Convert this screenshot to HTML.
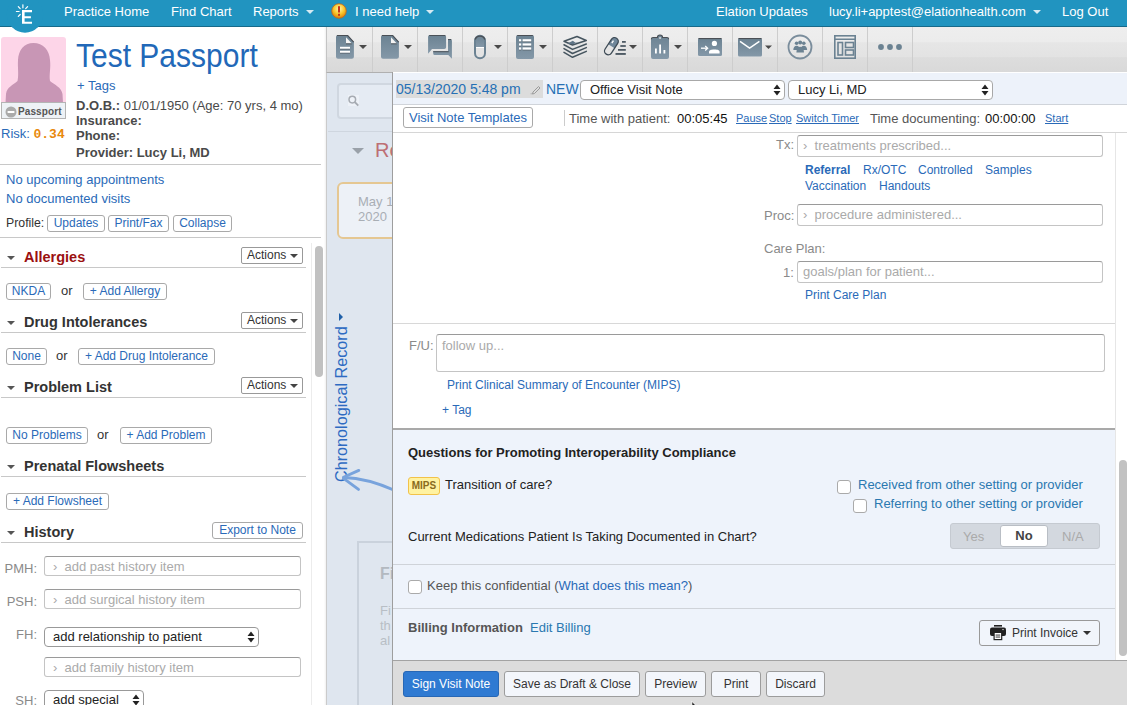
<!DOCTYPE html>
<html><head><meta charset="utf-8">
<style>
*{box-sizing:border-box;margin:0;padding:0}
html,body{width:1127px;height:705px;overflow:hidden;background:#fff;font-family:"Liberation Sans",sans-serif;font-size:13px;color:#4a4a4a}
.a{position:absolute;white-space:nowrap}
#nav{position:absolute;left:0;top:0;width:1127px;height:27px;background:#2194c0;border-bottom:1px solid #176a8a}
.nl{position:absolute;top:5px;color:#fff;font-size:13px;line-height:14px}
.caret{display:inline-block;width:0;height:0;border-left:4px solid transparent;border-right:4px solid transparent;border-top:4px solid #d6eaf3;vertical-align:middle;margin-left:7px;margin-top:-2px}
.lnk{color:#2a6ab8}
.btn{position:absolute;border:1px solid #a9a9a9;border-radius:3px;background:#fff;color:#2a6ab8;font-size:12px;text-align:center;white-space:nowrap}
.hdr{position:absolute;left:24px;font-size:14.5px;font-weight:bold;color:#333;white-space:nowrap}
.tri{position:absolute;left:7px;width:0;height:0;border-left:4px solid transparent;border-right:4px solid transparent;border-top:4px solid #555}
.hr{position:absolute;height:1px;background:#c8c8c8}
.act{position:absolute;left:241px;width:62px;height:17px;border:1px solid #999;border-radius:2px;background:#fff;color:#333;font-size:12px;line-height:15px;padding-left:5px}
.act i{position:absolute;right:4px;top:6px;border-left:4px solid transparent;border-right:4px solid transparent;border-top:4px solid #444}
.inp{position:absolute;border:1px solid #c4c4c4;border-top-color:#9a9a9a;border-radius:3px;background:#fff;color:#aaa;font-size:13px;white-space:nowrap}
</style></head><body>

<!-- NAV -->
<div id="nav">
  <div class="nl" style="left:64px">Practice Home</div>
  <div class="nl" style="left:171px">Find Chart</div>
  <div class="nl" style="left:253px">Reports<span class="caret"></span></div>
  <div class="nl" style="left:355px">I need help<span class="caret"></span></div>
  <div class="nl" style="left:716px">Elation Updates</div>
  <div class="nl" style="left:829px">lucy.li+apptest@elationhealth.com<span class="caret"></span></div>
  <div class="nl" style="left:1062px">Log Out</div>
</div>
<svg class="a" style="left:331px;top:3px" width="16" height="16" viewBox="0 0 16 16">
  <defs><radialGradient id="g1" cx="50%" cy="35%" r="60%"><stop offset="0" stop-color="#fff7b0"/><stop offset="0.6" stop-color="#f7c62a"/><stop offset="1" stop-color="#e08a10"/></radialGradient></defs>
  <circle cx="8" cy="8" r="7.3" fill="url(#g1)" stroke="#c0641a" stroke-width="0.8"/>
  <rect x="7" y="3.2" width="2" height="6.3" fill="#c8321a"/><rect x="7" y="10.8" width="2" height="2" fill="#c8321a"/>
</svg>
<!-- logo -->
<svg class="a" style="left:0;top:0" width="50" height="36" viewBox="0 0 50 36">
  <circle cx="25" cy="14.5" r="18.2" fill="#2194c0"/>
  <path d="M22 10H32V12.3H24.6V16.2H30.9V18.2H24.6V21.8H32V23.8H22Z" fill="#fff"/>
  <g stroke="#fff" stroke-width="1.2" stroke-linecap="round">
    <line x1="22.9" y1="4.8" x2="22.9" y2="7.8"/>
    <line x1="18.3" y1="6.6" x2="20.2" y2="8.6"/>
    <line x1="16.4" y1="11.5" x2="19.1" y2="11.5"/>
    <line x1="18.3" y1="16.4" x2="20.2" y2="14.5"/>
    <line x1="27.6" y1="6.6" x2="25.7" y2="8.6"/>
  </g>
</svg>

<!-- LEFT PANEL -->
<div class="a" style="left:1px;top:37px;width:65px;height:66px;background:#fdd5e8;border-radius:3px 3px 0 0;overflow:hidden">
  <svg width="65" height="66" viewBox="0 0 65 66">
    <path d="M32.5 6 C23 6 17.5 13 17 23 C16.5 31 18 37 16.5 44 C12 48 6 50 5 57 L4.5 66 L62 66 L61.5 57 C60 50 54 48 49 44 C48 37 50 31 49 23 C48.5 13 42 6 32.5 6Z" fill="#c896b5"/>
  </svg>
</div>
<div class="a" style="left:1px;top:102px;width:65px;height:17px;background:#eef2f6;border:1px solid #b4b4b4"></div>
<svg class="a" style="left:4.5px;top:105.5px" width="12" height="12" viewBox="0 0 12 12"><circle cx="6" cy="6" r="5.5" fill="#aaa"/><rect x="2.6" y="5" width="6.8" height="2" fill="#fff"/></svg>
<div class="a" style="left:18px;top:106px;font-size:10px;font-weight:bold;color:#555;letter-spacing:0.1px">Passport</div>
<div class="a lnk" style="left:1px;top:126px;font-size:13px">Risk: <span style="font-family:'Liberation Mono',monospace;color:#e8890c;font-size:13px;font-weight:bold">0.34</span></div>

<div class="a" style="left:76px;top:39px;font-size:30px;color:#2268b8;line-height:36px;transform:scaleY(1.08);transform-origin:0 29px">Test Passport</div>
<div class="a lnk" style="left:77px;top:78px;font-size:13px">+ Tags</div>
<div class="a" style="left:76px;top:98px;font-size:13px;color:#4a4a4a"><b>D.O.B.:</b> 01/01/1950 (Age: 70 yrs, 4 mo)</div>
<div class="a" style="left:76px;top:113px;font-size:13px;color:#4a4a4a;font-weight:bold">Insurance:</div>
<div class="a" style="left:76px;top:128px;font-size:13px;color:#4a4a4a;font-weight:bold">Phone:</div>
<div class="a" style="left:76px;top:145px;font-size:13px;color:#4a4a4a;font-weight:bold">Provider: Lucy Li, MD</div>
<div class="hr" style="left:0;top:164px;width:321px"></div>
<div class="a lnk" style="left:6px;top:172px">No upcoming appointments</div>
<div class="a lnk" style="left:6px;top:191px">No documented visits</div>
<div class="a" style="left:6px;top:216px;color:#333;font-size:12.3px">Profile:</div>
<div class="btn" style="left:47px;top:215px;width:58px;height:17px;line-height:15px">Updates</div>
<div class="btn" style="left:108px;top:215px;width:61px;height:17px;line-height:15px">Print/Fax</div>
<div class="btn" style="left:173px;top:215px;width:59px;height:17px;line-height:15px">Collapse</div>
<div class="hr" style="left:0;top:237px;width:321px"></div>

<!-- scroll track -->
<div class="a" style="left:311px;top:243px;width:1px;height:462px;background:#ececec"></div>
<div class="a" style="left:315px;top:246px;width:8px;height:131px;background:#c1c1c1;border-radius:4px"></div>
<div class="a" style="left:324px;top:27px;width:2px;height:678px;background:linear-gradient(90deg,rgba(0,0,0,0),rgba(0,0,0,0.06))"></div>

<!-- Allergies -->
<div class="tri" style="top:256px"></div>
<div class="hdr" style="top:249px;color:#9b1010">Allergies</div>
<div class="act" style="top:247px">Actions<i></i></div>
<div class="hr" style="left:1px;top:267px;width:305px"></div>
<div class="btn" style="left:6px;top:283px;width:45px;height:17px;line-height:15px">NKDA</div>
<div class="a" style="left:61px;top:283px;color:#333">or</div>
<div class="btn" style="left:83px;top:283px;width:84px;height:17px;line-height:15px">+ Add Allergy</div>

<!-- Drug Intolerances -->
<div class="tri" style="top:321px"></div>
<div class="hdr" style="top:314px">Drug Intolerances</div>
<div class="act" style="top:312px">Actions<i></i></div>
<div class="hr" style="left:1px;top:332px;width:305px"></div>
<div class="btn" style="left:6px;top:348px;width:41px;height:17px;line-height:15px">None</div>
<div class="a" style="left:56px;top:348px;color:#333">or</div>
<div class="btn" style="left:78px;top:348px;width:137px;height:17px;line-height:15px">+ Add Drug Intolerance</div>

<!-- Problem List -->
<div class="tri" style="top:386px"></div>
<div class="hdr" style="top:379px">Problem List</div>
<div class="act" style="top:377px">Actions<i></i></div>
<div class="hr" style="left:1px;top:397px;width:305px"></div>
<div class="btn" style="left:6px;top:427px;width:82px;height:17px;line-height:15px">No Problems</div>
<div class="a" style="left:97px;top:427px;color:#333">or</div>
<div class="btn" style="left:120px;top:427px;width:92px;height:17px;line-height:15px">+ Add Problem</div>

<!-- Prenatal -->
<div class="tri" style="top:465px"></div>
<div class="hdr" style="top:458px">Prenatal Flowsheets</div>
<div class="hr" style="left:1px;top:476px;width:305px"></div>
<div class="btn" style="left:6px;top:493px;width:103px;height:17px;line-height:15px">+ Add Flowsheet</div>

<!-- History -->
<div class="tri" style="top:531px"></div>
<div class="hdr" style="top:524px">History</div>
<div class="btn" style="left:212px;top:522px;width:91px;height:17px;line-height:15px">Export to Note</div>
<div class="hr" style="left:1px;top:542px;width:305px"></div>
<div class="a" style="left:0;width:37px;text-align:right;top:561px;color:#8a8a8a;font-size:13px">PMH:</div>
<div class="inp" style="left:44px;top:556px;width:257px;height:20px;line-height:20px;padding-left:8px">›&nbsp;&nbsp;add past history item</div>
<div class="a" style="left:0;width:37px;text-align:right;top:594px;color:#8a8a8a;font-size:13px">PSH:</div>
<div class="inp" style="left:44px;top:589px;width:257px;height:20px;line-height:20px;padding-left:8px">›&nbsp;&nbsp;add surgical history item</div>
<div class="a" style="left:0;width:37px;text-align:right;top:627px;color:#8a8a8a;font-size:13px">FH:</div>
<div class="inp" style="left:44px;top:627px;width:215px;height:20px;line-height:18px;padding-left:8px;color:#222;border-color:#999;border-radius:4px">add relationship to patient</div>
<svg class="a" style="left:247px;top:631px" width="8" height="12" viewBox="0 0 8 12"><path d="M0.5 5h7l-3.5-4.5z M0.5 7h7l-3.5 4.5z" fill="#222"/></svg>
<div class="inp" style="left:44px;top:657px;width:257px;height:20px;line-height:20px;padding-left:8px">›&nbsp;&nbsp;add family history item</div>
<div class="a" style="left:0;width:37px;text-align:right;top:693px;color:#8a8a8a;font-size:13px">SH:</div>
<div class="inp" style="left:44px;top:690px;width:100px;height:20px;line-height:18px;padding-left:8px;color:#222;border-color:#999;border-radius:4px">add special</div>
<svg class="a" style="left:132px;top:694px" width="8" height="12" viewBox="0 0 8 12"><path d="M0.5 5h7l-3.5-4.5z M0.5 7h7l-3.5 4.5z" fill="#222"/></svg>

<!-- TOOLBAR -->
<div class="a" style="left:326px;top:27px;width:801px;height:46px;background:linear-gradient(#eeeeee 0,#ececec 33%,#e6e6e6 35%,#e3e3e3 66%,#dddddd 68%,#d9d9d9 100%);border-bottom:1px solid #b0b0b0;border-left:1px solid #c4c4c4"></div>
<svg class="a" style="left:326px;top:27px" width="801" height="45" viewBox="326 27 801 45">
  <defs>
    <linearGradient id="ig" x1="0" y1="0" x2="0" y2="1"><stop offset="0" stop-color="#6b8292"/><stop offset="1" stop-color="#8498a8"/></linearGradient>
  </defs>
  <g stroke="#cdcdcd" stroke-width="1">
    <line x1="372.5" y1="27" x2="372.5" y2="72"/><line x1="417.5" y1="27" x2="417.5" y2="72"/><line x1="462.5" y1="27" x2="462.5" y2="72"/>
    <line x1="507.5" y1="27" x2="507.5" y2="72"/><line x1="552.5" y1="27" x2="552.5" y2="72"/><line x1="597.5" y1="27" x2="597.5" y2="72"/>
    <line x1="642.5" y1="27" x2="642.5" y2="72"/><line x1="687.5" y1="27" x2="687.5" y2="72"/><line x1="732.5" y1="27" x2="732.5" y2="72"/>
    <line x1="777.5" y1="27" x2="777.5" y2="72"/><line x1="822.5" y1="27" x2="822.5" y2="72"/><line x1="867.5" y1="27" x2="867.5" y2="72"/>
    <line x1="912.5" y1="27" x2="912.5" y2="72"/>
  </g>
  <g fill="#4a4a4a">
    <path d="M359 45h8l-4 4z"/><path d="M404 45h8l-4 4z"/><path d="M494 45h8l-4 4z"/><path d="M539 45h8l-4 4z"/>
    <path d="M629 45h8l-4 4z"/><path d="M674 45h8l-4 4z"/><path d="M765 45.5h7l-3.5 3.5z"/>
  </g>
  <g fill="url(#ig)">
    <!-- 1 doc lines -->
    <path d="M338 35h9.5l6.4 7v14.8a2 2 0 0 1-2 2h-13.9a2 2 0 0 1-2-2v-19.8a2 2 0 0 1 2-2z"/>
    <!-- 2 doc -->
    <path d="M383 35h9.5l6.4 7v14.8a2 2 0 0 1-2 2h-13.9a2 2 0 0 1-2-2v-19.8a2 2 0 0 1 2-2z"/>
    <!-- 3 chat -->
    <path d="M433.2 51.2H448V39h2.2a1.7 1.7 0 0 1 1.7 1.7v18.1l-3.6-3.8H434.8a1.6 1.6 0 0 1-1.6-1.6z" />
    <path d="M430 35h14.3a1.8 1.8 0 0 1 1.8 1.8v10.4a1.8 1.8 0 0 1-1.8 1.8h-12.3l-3.9 4.7v-16.9a1.8 1.8 0 0 1 1.8-1.8z"/>
    <!-- 4 pill top half -->
    <path d="M474 41.2a6 6 0 0 1 12 0v5.8h-12z"/>
    <!-- 5 list -->
    <rect x="516" y="35" width="18" height="24" rx="2"/>
    <!-- 8 clipboard -->
    <path d="M653 37.5h4.3a2.7 2.5 0 0 1 5.4 0h4.3a2 2 0 0 1 2 2v17.5a2 2 0 0 1-2 2h-14a2 2 0 0 1-2-2v-17.5a2 2 0 0 1 2-2z"/>
    <!-- 9 card -->
    <rect x="698" y="38" width="24" height="18" rx="1.5"/>
    <!-- 10 envelope -->
    <rect x="738" y="38" width="24" height="18.5" rx="1.5"/>
  </g>
  <!-- doc corner -->
  <g fill="none" stroke="#4a4f55" stroke-width="1.1"><path d="M337 35.55h10.7l6 6.5"/><path d="M382 35.55h10.7l6 6.5"/></g>
  <path d="M346 37.3v6.3h5.8z" fill="#f4f4f4"/><path d="M391 37.3v6.3h5.8z" fill="#f4f4f4"/>
  <g fill="#4a4f55"><rect x="346" y="43.4" width="5.8" height="0.9"/><rect x="391" y="43.4" width="5.8" height="0.9"/><rect x="340" y="48.6" width="10" height="0.8"/><rect x="340" y="52.6" width="10" height="0.8"/></g>
  <rect x="340" y="46.8" width="10" height="1.9" fill="#fff"/><rect x="340" y="50.8" width="10" height="1.9" fill="#fff"/>
  <g fill="#4a5158"><rect x="429.2" y="35" width="16.1" height="1"/><rect x="448" y="39" width="3.2" height="1"/><rect x="433.2" y="51.2" width="15.5" height="1"/></g>
  <!-- pill outline -->
  <rect x="475" y="35.8" width="10" height="22.4" rx="5" fill="none" stroke="#6b8292" stroke-width="2"/>
  <path d="M475.2 39.5a5 4.6 0 0 1 9.6 0" fill="none" stroke="#4a4f55" stroke-width="1.2"/>
  <rect x="476" y="47" width="8" height="1" fill="#fff"/>
  <!-- list bullets -->
  <g fill="#4a4f55"><rect x="517.2" y="35" width="15.6" height="1"/><rect x="519" y="41.4" width="2.2" height="0.7"/><rect x="519" y="45.6" width="2.2" height="0.7"/><rect x="519" y="49.6" width="2.2" height="0.7"/>
  <rect x="522.6" y="41.4" width="8.6" height="0.7"/><rect x="522.6" y="45.6" width="8.6" height="0.7"/><rect x="522.6" y="49.6" width="8.6" height="0.7"/></g>
  <g fill="#fff"><rect x="519" y="39.2" width="2.2" height="2.2"/><rect x="519" y="43.4" width="2.2" height="2.2"/><rect x="519" y="47.4" width="2.2" height="2.2"/>
  <rect x="522.6" y="39.2" width="8.6" height="2.2"/><rect x="522.6" y="43.4" width="8.6" height="2.2"/><rect x="522.6" y="47.4" width="8.6" height="2.2"/></g>
  <!-- 6 stack -->
  <g fill="none" stroke="#46555f" stroke-width="1.55" stroke-linejoin="round" stroke-linecap="round">
    <path d="M564 41.2L577 36.5L586.3 40.5L572.5 45z"/>
    <path d="M564 44.8L572.5 49.4L586.3 44"/>
    <path d="M564 48.6L572.5 53.5L586.3 47.6"/>
    <path d="M564 52.4L572.5 57.3L586.3 51.4"/>
  </g>
  <path d="M567.5 43.5L572.8 40.8L575.5 42.8L578.5 42L573 44.3z" fill="#5f7486"/>
  <!-- 7 pill diagonal -->
  <g transform="rotate(-57 611.4 46.2)">
    <path d="M611.4 42.45h5.75a3.75 3.75 0 0 1 0 7.5h-5.75z" fill="#70879a"/>
    <rect x="601.9" y="42.45" width="19" height="7.5" rx="3.75" fill="none" stroke="#3e4b56" stroke-width="1.3"/>
    <rect x="614.2" y="44.2" width="3" height="1.4" fill="#fff"/>
  </g>
  <g fill="#3e4b56"><rect x="622" y="41.1" width="3.8" height="1.6"/><rect x="620.3" y="45.2" width="5.5" height="1.6"/><rect x="618" y="49.1" width="7.8" height="1.6"/><rect x="615.5" y="53.1" width="10.3" height="1.7"/></g>
  <!-- clipboard bars -->
  <path d="M651.3 39.2a1.8 1.8 0 0 1 1.8-1.7h4.3a2.6 2.5 0 0 1 5.2 0h4.3a1.8 1.8 0 0 1 1.8 1.7" fill="none" stroke="#4a4f55" stroke-width="1.1"/>
  <rect x="659.3" y="37" width="1.5" height="2" fill="#d8d8d8"/>
  <g fill="#fff"><rect x="655" y="48.5" width="1.8" height="5"/><rect x="659.2" y="44.5" width="1.8" height="9"/><rect x="663.5" y="50" width="1.8" height="3.5"/></g>
  <!-- card person -->
  <rect x="698.5" y="38" width="23" height="1.1" fill="#4a4f55"/><rect x="738.5" y="38" width="23" height="1.1" fill="#4a4f55"/>
  <circle cx="714.4" cy="43.4" r="2.6" fill="#fff"/>
  <path d="M709 53.5v-1.5c0-1.6 1.4-2.5 5.4-2.5s5.2 0.9 5.2 2.5v1.5z" fill="#fff"/>
  <path d="M701 48.2h6" stroke="#fff" stroke-width="1.3"/><path d="M705.2 46l2.4 2.2-2.4 2.2" fill="none" stroke="#fff" stroke-width="1.3"/>
  <!-- envelope V -->
  <path d="M740 41.3l9.6 6.8 9.8-6.8" fill="none" stroke="#fff" stroke-width="1.5"/>
  <!-- 11 circle group -->
  <circle cx="800" cy="47" r="11.5" fill="none" stroke="#7a8d9c" stroke-width="1.8"/>
  <g fill="#6b8292"><circle cx="796.6" cy="43.2" r="1.8"/><circle cx="800.2" cy="42.6" r="2"/><circle cx="803.8" cy="43.2" r="1.8"/>
  <path d="M793.3 50c0-2.6 1.3-4.3 3.3-4.3s3.3 1.7 3.3 4.3z"/><path d="M800.5 50c0-2.6 1.3-4.3 3.3-4.3s3.3 1.7 3.3 4.3z"/><path d="M796.4 52.5c0-3.8 1.6-5.8 3.8-5.8s3.8 2 3.8 5.8z"/></g>
  <!-- 12 layout -->
  <g fill="none" stroke="#6b8292" stroke-width="1.6">
    <rect x="834.8" y="35.8" width="20.4" height="22.4"/>
    <rect x="838" y="42.5" width="4.5" height="12.5"/>
    <rect x="845.5" y="42.5" width="8" height="5"/>
    <rect x="845.5" y="50" width="8" height="5"/>
  </g>
  <rect x="835" y="38.5" width="20" height="1.5" fill="#6b8292"/>
  <!-- 13 dots -->
  <g fill="#6b8292"><circle cx="881" cy="47" r="2.9"/><circle cx="890" cy="47" r="2.9"/><circle cx="899" cy="47" r="2.9"/></g>
</svg>

<!-- CHRONO PANEL (behind overlay) -->
<div class="a" style="left:326px;top:73px;width:67px;height:632px;background:#dfe6ef;border-left:1px solid #cbcbcb"></div>
<div class="a" style="left:337px;top:83px;width:60px;height:36px;border:2px solid #d0d7e0;border-radius:4px;background:#e5ebf3"></div>
<div class="a" style="left:348px;top:95px;width:11px;height:11px;background:#eef2f8"></div>
<svg class="a" style="left:347px;top:95px" width="13" height="13" viewBox="0 0 13 13"><circle cx="5.3" cy="4.6" r="3.3" fill="none" stroke="#a6abb2" stroke-width="1.5"/><path d="M7.7 7l3.6 3.6" stroke="#a6abb2" stroke-width="1.8"/></svg>
<div class="a" style="left:328px;top:131px;width:65px;height:1px;background:#cfd6df"></div>
<div class="a" style="left:352px;top:148px;border-left:6px solid transparent;border-right:6px solid transparent;border-top:6px solid #9aa1a9"></div>
<div class="a" style="left:375px;top:139px;font-size:20px;color:#bd6f74;line-height:23px">Re</div>
<div class="a" style="left:337px;top:182px;width:70px;height:57px;border:2px solid #e5c792;border-radius:6px;background:#edf1f7"></div>
<div class="a" style="left:358px;top:194px;color:#a9aeb5;font-size:13px;line-height:15px">May 1<br>2020</div>
<div class="a" style="width:160px;height:18px;transform:rotate(-90deg);transform-origin:0 0;left:332px;top:482px;font-size:16.2px;color:#2e6bc2;line-height:18px">Chronological Record</div>
<div class="a" style="left:339px;top:313px;border-bottom:4px solid transparent;border-top:4px solid transparent;border-left:4.5px solid #2060a8"></div>
<svg class="a" style="left:330px;top:460px" width="70" height="40" viewBox="330 460 70 40">
  <g fill="none" stroke="#78a3dc" stroke-width="2.9" stroke-linecap="round">
    <path d="M343.5 477.3 L358.8 470.4"/><path d="M343.5 478.3 L358.5 489.4"/><path d="M344 477.5 C362 478 378 483 395 490.5"/>
  </g>
</svg>
<div class="a" style="left:357px;top:541px;width:50px;height:170px;border:2px solid #cad2dc"></div>
<div class="a" style="left:380px;top:565px;font-size:16px;font-weight:bold;color:#b3b9c0">Fi</div>
<div class="a" style="left:380px;top:603px;font-size:13px;line-height:15px;color:#b8bec5">Fi<br>th<br>al</div>

<!-- MODAL -->
<div id="modal" class="a" style="left:392px;top:72px;width:735px;height:633px;background:#fff;border-left:1px solid #9e9e9e;overflow:hidden">
</div>
<!-- header row 1 -->
<div class="a" style="left:393px;top:73px;width:734px;height:32px;background:#edf2fa;border-bottom:1px solid #d0d4da"></div>
<div class="a" style="left:396px;top:80px;width:147px;height:18px;background:#dcdcdc"></div>
<div class="a" style="left:396px;top:80px;font-size:14px;line-height:18px;color:#2670b5">05/13/2020 5:48 pm</div>
<svg class="a" style="left:530px;top:83px" width="12" height="12" viewBox="0 0 12 12"><path d="M3 9l5.5-5.5 1.5 1.5L4.5 10.5 2.5 11z" fill="none" stroke="#9a9a9a" stroke-width="1"/><path d="M0.5 10.8h2" stroke="#aaa" stroke-width="0.8"/></svg>
<div class="a" style="left:546px;top:80px;font-size:14px;line-height:18px;color:#2670b5">NEW</div>
<div class="a" style="left:580px;top:80px;width:205px;height:20px;background:#fff;border:1px solid #a8a8a8;border-radius:4px;font-size:13px;line-height:18px;color:#222;padding-left:9px">Office Visit Note</div>
<div class="a" style="left:788px;top:80px;width:205px;height:20px;background:#fff;border:1px solid #a8a8a8;border-radius:4px;font-size:13px;line-height:18px;color:#222;padding-left:9px">Lucy Li, MD</div>
<svg class="a" style="left:773px;top:84px" width="8" height="12" viewBox="0 0 8 12"><path d="M0.5 5h7l-3.5-4.5z M0.5 7h7l-3.5 4.5z" fill="#222"/></svg>
<svg class="a" style="left:981px;top:84px" width="8" height="12" viewBox="0 0 8 12"><path d="M0.5 5h7l-3.5-4.5z M0.5 7h7l-3.5 4.5z" fill="#222"/></svg>
<!-- header row 2 -->
<div class="a" style="left:393px;top:105px;width:734px;height:28px;background:#fff;border-bottom:1px solid #d6d6d6"></div>
<div class="btn" style="left:403px;top:107px;width:130px;height:21px;line-height:19px;font-size:13px">Visit Note Templates</div>
<div class="a" style="left:564px;top:110px;width:1px;height:16px;background:#ccc"></div>
<div class="a" style="left:569px;top:111px;color:#555;font-size:13px">Time with patient:</div>
<div class="a" style="left:677px;top:111px;color:#111;font-size:13px">00:05:45</div>
<div class="a" style="left:736px;top:112px;color:#2a6ab8;font-size:11px;text-decoration:underline">Pause</div>
<div class="a" style="left:769px;top:112px;color:#2a6ab8;font-size:11px;text-decoration:underline">Stop</div>
<div class="a" style="left:796px;top:112px;color:#2a6ab8;font-size:11px;text-decoration:underline">Switch Timer</div>
<div class="a" style="left:870px;top:111px;color:#555;font-size:13px">Time documenting:</div>
<div class="a" style="left:985px;top:111px;color:#111;font-size:13px">00:00:00</div>
<div class="a" style="left:1045px;top:112px;color:#2a6ab8;font-size:11px;text-decoration:underline">Start</div>

<!-- body -->
<div class="a" style="left:1115px;top:133px;width:1px;height:296px;background:#e6e6e6"></div>
<div class="a" style="left:776px;top:137px;color:#8a8a8a;font-size:13px">Tx:</div>
<div class="inp" style="left:797px;top:135px;width:306px;height:22px;line-height:20px;padding-left:5px">›&nbsp;&nbsp;treatments prescribed...</div>
<div class="a lnk" style="left:805px;top:163px;font-size:12px;font-weight:bold">Referral</div>
<div class="a lnk" style="left:863px;top:163px;font-size:12px">Rx/OTC</div>
<div class="a lnk" style="left:918px;top:163px;font-size:12px">Controlled</div>
<div class="a lnk" style="left:985px;top:163px;font-size:12px">Samples</div>
<div class="a lnk" style="left:805px;top:179px;font-size:12px">Vaccination</div>
<div class="a lnk" style="left:879px;top:179px;font-size:12px">Handouts</div>
<div class="a" style="left:764px;top:208px;color:#8a8a8a;font-size:13px">Proc:</div>
<div class="inp" style="left:797px;top:204px;width:306px;height:22px;line-height:20px;padding-left:5px">›&nbsp;&nbsp;procedure administered...</div>
<div class="a" style="left:764px;top:241px;color:#8a8a8a;font-size:13px">Care Plan:</div>
<div class="a" style="left:783px;top:265px;color:#8a8a8a;font-size:13px">1:</div>
<div class="inp" style="left:797px;top:261px;width:306px;height:22px;line-height:20px;padding-left:5px">goals/plan for patient...</div>
<div class="a lnk" style="left:805px;top:288px;font-size:12px">Print Care Plan</div>
<div class="a" style="left:393px;top:323px;width:722px;height:1px;background:#d8d8d8"></div>

<div class="a" style="left:409px;top:338px;color:#8a8a8a;font-size:13px">F/U:</div>
<div class="inp" style="left:436px;top:334px;width:669px;height:38px;padding:3px 5px;line-height:16px">follow up...</div>
<div class="a lnk" style="left:447px;top:378px;font-size:12px">Print Clinical Summary of Encounter (MIPS)</div>
<div class="a lnk" style="left:442px;top:403px;font-size:12px">+ Tag</div>

<!-- questions -->
<div class="a" style="left:393px;top:428px;width:722px;height:232px;background:#eef3fb;border-top:2px solid #a9a9a9"></div>
<div class="a" style="left:408px;top:445px;font-size:13px;font-weight:bold;color:#222">Questions for Promoting Interoperability Compliance</div>
<div class="a" style="left:408px;top:477px;width:32px;height:18px;background:#fff2a1;border:1px solid #f2c24a;border-radius:3px;font-size:10px;font-weight:bold;color:#8a6a1d;text-align:center;line-height:16px">MIPS</div>
<div class="a" style="left:445px;top:477px;font-size:13px;color:#222">Transition of care?</div>
<div class="a" style="left:837px;top:480px;width:14px;height:14px;background:#fff;border:1px solid #aaa;border-radius:3px"></div>
<div class="a" style="left:858px;top:477px;font-size:13px;color:#2a78b0">Received from other setting or provider</div>
<div class="a" style="left:853px;top:499px;width:14px;height:14px;background:#fff;border:1px solid #aaa;border-radius:3px"></div>
<div class="a" style="left:874px;top:496px;font-size:13px;color:#2a78b0">Referring to other setting or provider</div>
<div class="a" style="left:408px;top:529px;font-size:13px;color:#222">Current Medications Patient Is Taking Documented in Chart?</div>
<div class="a" style="left:950px;top:523px;width:150px;height:26px;background:#d3d8df;border:1px solid #c5cad1;border-radius:3px"></div>
<div class="a" style="left:963px;top:529px;font-size:13px;color:#aaa">Yes</div>
<div class="a" style="left:1000px;top:525px;width:48px;height:22px;background:#fff;border:1px solid #b9bec5;border-radius:3px;font-size:13px;font-weight:bold;color:#444;text-align:center;line-height:20px">No</div>
<div class="a" style="left:1062px;top:529px;font-size:13px;color:#aaa">N/A</div>
<div class="a" style="left:393px;top:564px;width:722px;height:1px;background:#cfd3d9"></div>
<div class="a" style="left:408px;top:580px;width:14px;height:14px;background:#fff;border:1px solid #aaa;border-radius:3px"></div>
<div class="a" style="left:427px;top:578px;font-size:13px;color:#555">Keep this confidential (<span style="color:#2a6ab8">What does this mean?</span>)</div>
<div class="a" style="left:393px;top:608px;width:722px;height:1px;background:#cfd3d9"></div>
<div class="a" style="left:408px;top:620px;font-size:13px;font-weight:bold;color:#555">Billing Information</div>
<div class="a" style="left:530px;top:620px;font-size:13px;color:#2a78b0">Edit Billing</div>
<div class="a" style="left:979px;top:620px;width:121px;height:26px;background:#f1f5fb;border:1px solid #999;border-radius:3px"></div>
<svg class="a" style="left:989px;top:624px" width="18" height="17" viewBox="0 0 18 17"><rect x="5" y="1" width="8" height="1.6" fill="#222"/><rect x="1" y="3.6" width="16" height="8.4" rx="2" fill="#222"/><circle cx="14" cy="5.6" r="0.7" fill="#fff"/><rect x="5.1" y="8.4" width="7.6" height="7.2" fill="#fff" stroke="#222" stroke-width="1.2"/><rect x="6.6" y="10.6" width="4.6" height="0.9" fill="#222"/><rect x="6.6" y="12.6" width="4.6" height="0.9" fill="#222"/></svg>
<div class="a" style="left:1012px;top:626px;font-size:12px;color:#333">Print Invoice</div>
<div class="a" style="left:1083px;top:631px;border-left:4px solid transparent;border-right:4px solid transparent;border-top:4px solid #333"></div>

<!-- right scrollbar -->
<div class="a" style="left:1115px;top:428px;width:1px;height:232px;background:#e6e6e6"></div>
<div class="a" style="left:1119px;top:460px;width:8px;height:196px;background:#c2c2c2;border-radius:4px"></div>

<!-- footer -->
<div class="a" style="left:393px;top:660px;width:734px;height:45px;background:#dcdcdc;border-top:1px solid #a3a3a3"></div>
<div class="a" style="left:403px;top:671px;width:96px;height:26px;background:#2f7ad2;border:1px solid #2767b5;border-radius:3px;color:#fff;font-size:12px;text-align:center;line-height:24px">Sign Visit Note</div>
<div class="a" style="left:504px;top:671px;width:136px;height:26px;background:#f3f6fb;border:1px solid #9c9c9c;border-radius:3px;color:#333;font-size:12px;text-align:center;line-height:24px">Save as Draft &amp; Close</div>
<div class="a" style="left:645px;top:671px;width:61px;height:26px;background:#f3f6fb;border:1px solid #9c9c9c;border-radius:3px;color:#333;font-size:12px;text-align:center;line-height:24px">Preview</div>
<div class="a" style="left:711px;top:671px;width:50px;height:26px;background:#f3f6fb;border:1px solid #9c9c9c;border-radius:3px;color:#333;font-size:12px;text-align:center;line-height:24px">Print</div>
<div class="a" style="left:766px;top:671px;width:59px;height:26px;background:#f3f6fb;border:1px solid #9c9c9c;border-radius:3px;color:#333;font-size:12px;text-align:center;line-height:24px">Discard</div>

<svg class="a" style="left:690px;top:700px" width="10" height="5" viewBox="0 0 10 5"><path d="M1.8 1.2L6 5.5H1.8z" fill="#222" stroke="#fff" stroke-width="0.9"/></svg>
</body></html>
